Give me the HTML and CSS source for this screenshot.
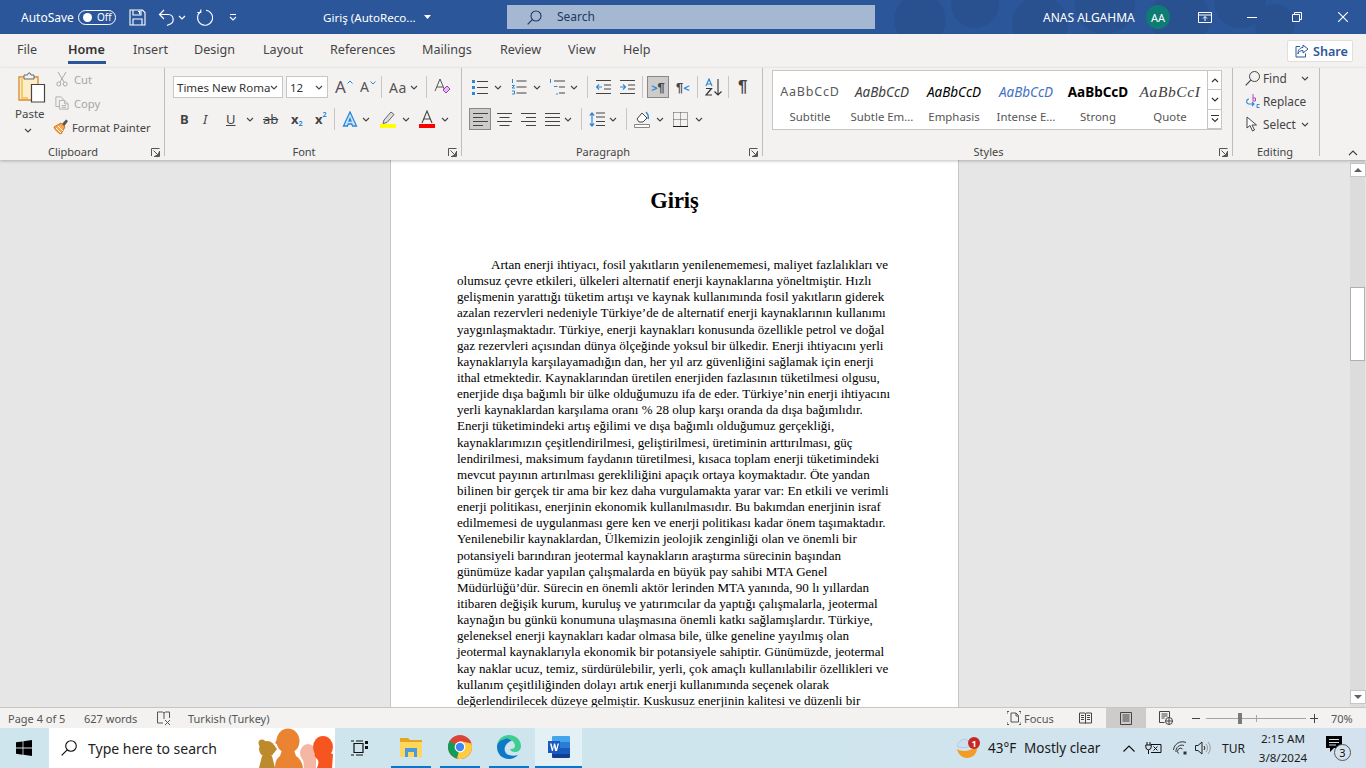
FILE: index.html
```html
<!DOCTYPE html>
<html lang="tr">
<head>
<meta charset="utf-8">
<title>Giriş - Word</title>
<link rel="stylesheet" href="styles.css">
</head>
<body>
<svg class="defs" width="0" height="0" aria-hidden="true">
  <symbol id="chev" viewBox="0 0 8 5"><path d="M1 1l3 3 3-3" fill="none" stroke="#444" stroke-width="1.1"/></symbol>
  <symbol id="launch" viewBox="0 0 9 9"><path d="M.5 8V.5H8.500M8.500 3v5.500H3M2.500 2.500l5 5M4.500 7.500h3v-3" fill="none" stroke="#555" stroke-width="1"/></symbol>
</svg>
<div class="app">
  <header class="titlebar">
    <svg class="clouds" width="520" height="34" viewBox="0 0 520 34" aria-hidden="true"><g fill="#29518f"><circle cx="40" cy="20" r="26"/><circle cx="95" cy="4" r="24"/><circle cx="160" cy="24" r="28"/><circle cx="225" cy="4" r="30"/><circle cx="300" cy="18" r="30"/><circle cx="360" cy="2" r="26"/><circle cx="395" cy="24" r="20"/></g></svg>
    <div class="qat">
      <span class="autosave">AutoSave</span>
      <span class="toggle"><i class="knob"></i><b>Off</b></span>
      <svg class="ic-save" width="17" height="17" viewBox="0 0 17 17"><path d="M1 1h12.500L16 3.500V16H1zM4 1v5h8V1M4 16v-6h9v6M9 2.500h1.500V5" fill="none" stroke="#fff" stroke-width="1.100"/></svg>
      <svg class="ic-undo" width="17" height="17" viewBox="0 0 17 17"><path d="M6 1L1.500 5.500 6 10M2 5.500h8.500a5 5 0 0 1 1 9.800L9 16.500" fill="none" stroke="#fff" stroke-width="1.200"/></svg>
      <svg class="ic-chev-w" width="8" height="5" viewBox="0 0 8 5"><path d="M1 1l3 3 3-3" fill="none" stroke="#fff" stroke-width="1.200"/></svg>
      <svg class="ic-redo" width="17" height="17" viewBox="0 0 17 17"><path d="M4.500 2.800A7.500 7.500 0 1 0 10 1.300M4.800 .5v3h-3.500" fill="none" stroke="#fff" stroke-width="1.100"/></svg>
      <svg class="ic-qat" width="8" height="7" viewBox="0 0 8 7"><path d="M1 .5h6M1 3l3 3 3-3" fill="none" stroke="#fff" stroke-width="1.100"/></svg>
    </div>
    <div class="doc-title"><span>Giriş (AutoReco...</span><svg width="7" height="4" viewBox="0 0 7 4"><path d="M0 0h7L3.500 4z" fill="#fff"/></svg></div>
    <div class="search">
      <svg width="15" height="15" viewBox="0 0 15 15"><circle cx="9" cy="6" r="5" fill="none" stroke="#1c3763" stroke-width="1.100"/><path d="M5.300 9.700L.7 14.300" stroke="#1c3763" stroke-width="1.200"/></svg>
      <span>Search</span>
    </div>
    <div class="user"><span>ANAS ALGAHMA</span><i class="avatar">AA</i></div>
    <div class="winbtns">
      <svg width="14" height="11" viewBox="0 0 14 11"><path d="M.5.500h13v10H.5zM.5 3h13M7 9V4.500M5 6.500l2-2 2 2" fill="none" stroke="#fff"/></svg>
      <svg width="10" height="1" viewBox="0 0 10 1"><path d="M0 .5h10" stroke="#fff"/></svg>
      <svg width="10" height="10" viewBox="0 0 10 10"><path d="M.5 2.500h7v7h-7zM2.500 2.500V.5h7v7h-2" fill="none" stroke="#fff"/></svg>
      <svg width="10" height="10" viewBox="0 0 10 10"><path d="M0 0l10 10M10 0L0 10" stroke="#fff" stroke-width="1.100"/></svg>
    </div>
  </header>

  <nav class="tabs">
    <a>File</a><a class="active">Home</a><a>Insert</a><a>Design</a><a>Layout</a><a>References</a><a>Mailings</a><a>Review</a><a>View</a><a>Help</a>
    <button class="share"><svg width="14" height="14" viewBox="0 0 14 14"><path d="M8 1l5 4-5 4V6.500C5 6.500 3.500 8 3 10c-.2-4 2-6.500 5-6.500zM5 2.500H1v10.500h9.500V9.500" fill="none" stroke="#2b579a" stroke-width="1"/></svg>Share</button>
  </nav>

  <section class="ribbon">
    <div class="group g-clip">
      <div class="clip-body">
        <div class="paste">
          <svg width="28" height="31" viewBox="0 0 28 31"><path d="M1 5h19v23H1z" fill="#fdeec9" stroke="#d98a2b" stroke-width="1.300"/><path d="M4 5v21h6" fill="none" stroke="#f5c96d" stroke-width="2"/><path d="M6 7V3h3.500l1-2h1.500l1 2H16v4z" fill="#f3f2f1" stroke="#666"/><path d="M13.500 12.500h13V30h-13z" fill="#fff" stroke="#444" stroke-width="1.200"/></svg>
          <span class="paste-l">Paste</span>
          <svg class="chev" width="8" height="5"><use href="#chev"/></svg>
        </div>
        <div class="clip-rows">
          <div class="clip-row off"><svg width="12" height="16" viewBox="0 0 12 16"><path d="M2 1l6 10M10 1L4 11" fill="none" stroke="#aaa"/><circle cx="2.800" cy="13" r="2" fill="none" stroke="#aaa"/><circle cx="9.200" cy="13" r="2" fill="none" stroke="#aaa"/></svg><span>Cut</span></div>
          <div class="clip-row off"><svg width="16" height="16" viewBox="0 0 16 16"><path d="M1 1h6l2 2v2M1 1v11h4M5 5h6l4 4v6H5zM11 5v4h4M7.500 11h5M7.500 13h5" fill="none" stroke="#aaa"/></svg><span>Copy</span></div>
          <div class="clip-row"><svg width="16" height="16" viewBox="0 0 16 16"><path d="M9 5l4-4.500 2 1.500-3.500 5z" fill="#555"/><path d="M1 8l7-4 4 4-4 7c-3-1-6-4-7-7z" fill="#f3a650" stroke="#d9731a"/><path d="M3 9l5 5M5 7l5 5" stroke="#fff"/></svg><span>Format Painter</span></div>
        </div>
      </div>
      <div class="g-label"><span>Clipboard</span><svg class="launch" width="9" height="9"><use href="#launch"/></svg></div>
    </div>

    <div class="group g-font">
      <div class="frow fr1">
        <div class="combo"><span>Times New Roma</span><svg width="8" height="5"><use href="#chev"/></svg></div>
        <div class="combo"><span>12</span><svg width="8" height="5"><use href="#chev"/></svg></div>
        <span class="a-btn">A<svg width="6" height="4" viewBox="0 0 6 4"><path d="M.5 3.500L3 1l2.500 2.500" fill="none" stroke="#2b88d8"/></svg></span>
        <span class="a-btn small">A<svg width="6" height="4" viewBox="0 0 6 4"><path d="M.5.500L3 3 5.500.5" fill="none" stroke="#2b88d8"/></svg></span>
        <i class="sep"></i>
        <span class="aa">Aa<svg width="8" height="5"><use href="#chev"/></svg></span>
        <i class="sep"></i>
        <svg width="17" height="18" viewBox="0 0 17 18"><path d="M1 13L6 1l5 12M3 9h6" fill="none" stroke="#555"/><path d="M9 12l4-4 3 3-4 4z" fill="#e3bdf0" stroke="#a13bb5"/></svg>
      </div>
      <div class="frow fr2">
        <b class="fmt bold">B</b>
        <i class="fmt ital">I</i>
        <span class="fmt und">U</span>
        <svg width="8" height="5"><use href="#chev"/></svg>
        <span class="fmt strike">ab</span>
        <span class="fmt sub">x<small>2</small></span>
        <span class="fmt sub">x<sup>2</sup></span>
        <i class="sep"></i>
        <svg width="16" height="16" viewBox="0 0 16 16"><path d="M1.500 15L8 1l6.500 14h-4L9.800 13H6.200l-.7 2zM7 10h2L8 7.500z" fill="#cfe6f8" stroke="#2b88d8" stroke-width="1.300"/></svg>
        <svg width="8" height="5"><use href="#chev"/></svg>
        <svg width="16" height="18" viewBox="0 0 16 18"><path d="M4 10l7-8 3 2.500-7 8-4 1z" fill="#ddd" stroke="#666"/><path d="M0 14h16v4H0z" fill="#ff0"/></svg>
        <svg width="8" height="5"><use href="#chev"/></svg>
        <svg width="16" height="18" viewBox="0 0 16 18"><path d="M3 13L8 1l5 12M4.800 9h6.400" fill="none" stroke="#444" stroke-width="1.100"/><path d="M0 14h16v4H0z" fill="#f00"/></svg>
        <svg width="8" height="5"><use href="#chev"/></svg>
      </div>
      <div class="g-label"><span>Font</span><svg class="launch" width="9" height="9"><use href="#launch"/></svg></div>
    </div>

    <div class="group g-para">
      <div class="frow pr1">
        <svg width="16" height="15" viewBox="0 0 16 15"><path d="M0 0h3v3H0zM0 6h3v3H0zM0 12h3v3H0z" fill="#2b88d8"/><path d="M5 1.500h11M5 7.500h11M5 13.500h11" stroke="#444"/></svg>
        <svg width="8" height="5"><use href="#chev"/></svg>
        <svg width="16" height="16" viewBox="0 0 16 16"><path d="M1.500 0v4M1 6.500h2.500L1 9h3M1 12h2.500v3H1" fill="none" stroke="#2b88d8"/><path d="M5.500 2h10M5.500 8h10M5.500 14h10" stroke="#444"/></svg>
        <svg width="8" height="5"><use href="#chev"/></svg>
        <svg width="16" height="16" viewBox="0 0 16 16"><path d="M1.500 0v4" stroke="#2b88d8"/><path d="M5 7.500h3.500M8 14v2" stroke="#2b88d8"/><path d="M5 2h11M10 8h6M10 14h6" stroke="#444"/></svg>
        <svg width="8" height="5"><use href="#chev"/></svg>
        <i class="sep"></i>
        <svg width="15" height="14" viewBox="0 0 15 14"><path d="M0 .5h15M8 5h7M8 9h7M0 13.500h15" stroke="#444"/><path d="M6 7H.5M3 4.500L.5 7 3 9.500" fill="none" stroke="#2b88d8" stroke-width="1.200"/></svg>
        <svg width="15" height="14" viewBox="0 0 15 14"><path d="M0 .5h15M8 5h7M8 9h7M0 13.500h15" stroke="#444"/><path d="M0 7h5.500M3 4.500L5.500 7 3 9.500" fill="none" stroke="#2b88d8" stroke-width="1.200"/></svg>
        <i class="sep"></i>
        <span class="pressed"><em class="caret">&gt;</em><b>¶</b></span>
        <span class="rtl"><b>¶</b><em class="caret">&lt;</em></span>
        <i class="sep"></i>
        <svg width="17" height="18" viewBox="0 0 17 18"><path d="M1 8l3-7 3 7M2 6h4" fill="none" stroke="#2b88d8" stroke-width="1.200"/><path d="M1 10.500h5.500L1 17h6" fill="none" stroke="#333" stroke-width="1.200"/><path d="M13 1v16M9.500 13.500L13 17l3.500-3.500" fill="none" stroke="#333" stroke-width="1.100"/></svg>
        <i class="sep"></i>
        <span class="pilcrow">¶</span>
      </div>
      <div class="frow pr2">
        <span class="pressed"><svg width="15" height="13" viewBox="0 0 15 13"><path d="M0 .5h15M0 4.500h10M0 8.500h15M0 12.500h10" stroke="#444"/></svg></span>
        <svg width="15" height="13" viewBox="0 0 15 13"><path d="M0 .5h15M2.500 4.500h10M0 8.500h15M2.500 12.500h10" stroke="#444"/></svg>
        <svg width="15" height="13" viewBox="0 0 15 13"><path d="M0 .5h15M5 4.500h10M0 8.500h15M5 12.500h10" stroke="#444"/></svg>
        <svg width="15" height="13" viewBox="0 0 15 13"><path d="M0 .5h15M0 4.500h15M0 8.500h15M0 12.500h15" stroke="#444"/></svg>
        <svg width="8" height="5"><use href="#chev"/></svg>
        <i class="sep"></i>
        <svg width="16" height="15" viewBox="0 0 16 15"><path d="M3 1v13M.8 3.500L3 1l2.200 2.500M.8 11.500L3 14l2.200-2.500" fill="none" stroke="#2b88d8" stroke-width="1.200"/><path d="M7 1h9M7 5h9M7 9.500h9M7 13.500h9" stroke="#444"/></svg>
        <svg width="8" height="5"><use href="#chev"/></svg>
        <i class="sep"></i>
        <svg width="16" height="17" viewBox="0 0 16 17"><path d="M3 8l5-6 5 5-4 4H5z" fill="#fff" stroke="#444"/><path d="M12 1c2 2 3 4 2 7" fill="none" stroke="#2b88d8" stroke-width="1.500"/><path d="M.5 13.500h15v3H.5z" fill="#fff" stroke="#888"/></svg>
        <svg width="8" height="5"><use href="#chev"/></svg>
        <svg width="15" height="15" viewBox="0 0 15 15"><path d="M.5.500h14M.5 7.500h14M.5.500v14M14.500.500v14M7.500.500v14" fill="none" stroke="#555" stroke-dasharray="1 1"/><path d="M0 14.500h15" stroke="#222"/></svg>
        <svg width="8" height="5"><use href="#chev"/></svg>
      </div>
      <div class="g-label"><span>Paragraph</span><svg class="launch" width="9" height="9"><use href="#launch"/></svg></div>
    </div>

    <div class="group g-styles">
      <div class="gallery">
        <div class="style"><span class="s-sample s1">AaBbCcD</span><span class="s-name">Subtitle</span></div>
        <div class="style"><span class="s-sample s2">AaBbCcD</span><span class="s-name">Subtle Em...</span></div>
        <div class="style"><span class="s-sample s3">AaBbCcD</span><span class="s-name">Emphasis</span></div>
        <div class="style"><span class="s-sample s4">AaBbCcD</span><span class="s-name">Intense E...</span></div>
        <div class="style"><span class="s-sample s5">AaBbCcD</span><span class="s-name">Strong</span></div>
        <div class="style"><span class="s-sample s6">AaBbCcI</span><span class="s-name">Quote</span></div>
        <div class="g-scroll">
          <span><svg width="8" height="5" viewBox="0 0 8 5"><path d="M1 4l3-3 3 3" fill="none" stroke="#333" stroke-width="1.200"/></svg></span>
          <span><svg width="8" height="5" viewBox="0 0 8 5"><path d="M1 1l3 3 3-3" fill="none" stroke="#333" stroke-width="1.200"/></svg></span>
          <span><svg width="8" height="8" viewBox="0 0 8 8"><path d="M0 .5h8M1 3.500l3 3 3-3" fill="none" stroke="#333" stroke-width="1.100"/></svg></span>
        </div>
      </div>
      <div class="g-label"><span>Styles</span><svg class="launch" width="9" height="9"><use href="#launch"/></svg></div>
    </div>

    <div class="group g-edit">
      <div class="edit-rows">
        <div class="edit-row"><svg width="15" height="15" viewBox="0 0 15 15"><circle cx="9.500" cy="5.500" r="5" fill="none" stroke="#444"/><path d="M5.800 9.200L.7 14.300" stroke="#444" stroke-width="1.200"/></svg><span>Find</span><svg class="e-chev" width="8" height="5"><use href="#chev"/></svg></div>
        <div class="edit-row"><svg width="15" height="15" viewBox="0 0 15 15"><path d="M8 0v7M8 4h2.500v3H8" fill="none" stroke="#b146c2"/><path d="M14.500 10.500h-2.500v3h2.500" fill="none" stroke="#2b88d8"/><path d="M4 5C1 5 .8 10 4 10h5M7 8l2 2-2 2" fill="none" stroke="#2b88d8" stroke-width="1.100"/></svg><span>Replace</span></div>
        <div class="edit-row"><svg width="15" height="16" viewBox="0 0 15 16"><path d="M2 1v11l3-2.500L7.500 15l2-1-2.500-5h4.500z" fill="#fff" stroke="#444"/></svg><span>Select</span><svg class="e-chev2" width="8" height="5"><use href="#chev"/></svg></div>
      </div>
      <div class="g-label"><span>Editing</span></div>
    </div>
    <svg class="collapse" width="10" height="6" viewBox="0 0 10 6"><path d="M1 5l4-4 4 4" fill="none" stroke="#444" stroke-width="1.100"/></svg>
  </section>

  <main class="workspace">
    <article class="page">
      <h1>Giriş</h1>
      <div class="body-text">
        <p class="first">Artan enerji ihtiyacı, fosil yakıtların yenilenememesi, maliyet fazlalıkları ve</p>
        <p>olumsuz çevre etkileri, ülkeleri alternatif enerji kaynaklarına yöneltmiştir. Hızlı</p>
        <p>gelişmenin yarattığı tüketim artışı ve kaynak kullanımında fosil yakıtların giderek</p>
        <p>azalan rezervleri nedeniyle Türkiye’de de alternatif enerji kaynaklarının kullanımı</p>
        <p>yaygınlaşmaktadır. Türkiye, enerji kaynakları konusunda özellikle petrol ve doğal</p>
        <p>gaz rezervleri açısından dünya ölçeğinde yoksul bir ülkedir. Enerji ihtiyacını yerli</p>
        <p>kaynaklarıyla karşılayamadığın dan, her yıl arz güvenliğini sağlamak için enerji</p>
        <p>ithal etmektedir. Kaynaklarından üretilen enerjiden fazlasının tüketilmesi olgusu,</p>
        <p>enerjide dışa bağımlı bir ülke olduğumuzu ifa de eder. Türkiye’nin enerji ihtiyacını</p>
        <p>yerli kaynaklardan karşılama oranı % 28 olup karşı oranda da dışa bağımlıdır.</p>
        <p>Enerji tüketimindeki artış eğilimi ve dışa bağımlı olduğumuz gerçekliği,</p>
        <p>kaynaklarımızın çeşitlendirilmesi, geliştirilmesi, üretiminin arttırılması, güç</p>
        <p>lendirilmesi, maksimum faydanın türetilmesi, kısaca toplam enerji tüketimindeki</p>
        <p>mevcut payının artırılması gerekliliğini apaçık ortaya koymaktadır. Öte yandan</p>
        <p>bilinen bir gerçek tir ama bir kez daha vurgulamakta yarar var: En etkili ve verimli</p>
        <p>enerji politikası, enerjinin ekonomik kullanılmasıdır. Bu bakımdan enerjinin israf</p>
        <p>edilmemesi de uygulanması gere ken ve enerji politikası kadar önem taşımaktadır.</p>
        <p>Yenilenebilir kaynaklardan, Ülkemizin jeolojik zenginliği olan ve önemli bir</p>
        <p>potansiyeli barındıran jeotermal kaynakların araştırma sürecinin başından</p>
        <p>günümüze kadar yapılan çalışmalarda en büyük pay sahibi MTA Genel</p>
        <p>Müdürlüğü’dür. Sürecin en önemli aktör lerinden MTA yanında, 90 lı yıllardan</p>
        <p>itibaren değişik kurum, kuruluş ve yatırımcılar da yaptığı çalışmalarla, jeotermal</p>
        <p>kaynağın bu günkü konumuna ulaşmasına önemli katkı sağlamışlardır. Türkiye,</p>
        <p>geleneksel enerji kaynakları kadar olmasa bile, ülke geneline yayılmış olan</p>
        <p>jeotermal kaynaklarıyla ekonomik bir potansiyele sahiptir. Günümüzde, jeotermal</p>
        <p>kay naklar ucuz, temiz, sürdürülebilir, yerli, çok amaçlı kullanılabilir özellikleri ve</p>
        <p>kullanım çeşitliliğinden dolayı artık enerji kullanımında seçenek olarak</p>
        <p>değerlendirilecek düzeye gelmiştir. Kuskusuz enerjinin kalitesi ve düzenli bir</p>
      </div>
    </article>
    <div class="vscroll">
      <span class="sb-btn"><svg width="8" height="4" viewBox="0 0 8 4"><path d="M4 0l4 4H0z" fill="#606060"/></svg></span>
      <span class="sb-thumb"></span>
      <span class="sb-btn"><svg width="8" height="4" viewBox="0 0 8 4"><path d="M0 0h8L4 4z" fill="#606060"/></svg></span>
    </div>
  </main>

  <footer class="status">
    <span class="st-page">Page 4 of 5</span>
    <span class="st-words">627 words</span>
    <svg class="st-proof" width="14" height="14" viewBox="0 0 14 14"><path d="M.5 1h5l1.500 1 1.500-1h4v6M7 2v6M.5 1v11H6" fill="none" stroke="#555"/><path d="M8 9l5 5M13 9l-5 5" stroke="#555"/></svg>
    <span class="st-lang">Turkish (Turkey)</span>
    <div class="st-right">
      <svg class="st-focus" width="14" height="14" viewBox="0 0 14 14"><path d="M4 2h5l2.500 2.500V11H4zM9 2v3h2.500M0 3V.5h2M12 .5h2V3M0 11v2.500h2M12 13.500h2V11" fill="none" stroke="#555"/></svg>
      <span class="st-focus-l">Focus</span>
      <svg class="st-read" width="13" height="12" viewBox="0 0 13 12"><path d="M.5 1H6l.5.500L7 1h5.500v10H7l-.5.500L6 11H.5zM6.500 1.500v9.500M2 3.500h3M2 5.500h3M2 7.500h3M8 3.500h3M8 5.500h3M8 7.500h3" fill="none" stroke="#444"/></svg>
      <span class="st-print"><svg width="12" height="13" viewBox="0 0 12 13"><path d="M.5.500h11v12H.5zM2.500 3h7M2.500 5h7M2.500 7h7M2.500 9h7" fill="none" stroke="#444"/></svg></span>
      <svg class="st-web" width="14" height="14" viewBox="0 0 14 14"><path d="M.5.500h10v7M.5.500v11h5M2.500 3h6M2.500 5h6M2.500 7h3" fill="none" stroke="#444"/><circle cx="10" cy="10" r="3.500" fill="#f3f2f1" stroke="#444"/><path d="M6.500 10h7M10 6.500v7" stroke="#444"/></svg>
      <span class="z-sym z-minus"></span>
      <span class="slider"><i class="tick"></i><i class="thumb"></i></span>
      <span class="z-sym z-plus"></span>
      <span class="zoom-val">70%</span>
    </div>
  </footer>

  <footer class="taskbar">
    <svg class="win" width="16" height="16" viewBox="0 0 16 16"><path d="M0 2.300l6.600-.9v6.200H0zM7.400 1.300L16 0v7.600H7.400zM0 8.400h6.600v6.300L0 13.800zM7.400 8.400H16V16l-8.600-1.200z" fill="#000"/></svg>
    <div class="tb-search">
      <svg width="16" height="16" viewBox="0 0 16 16"><circle cx="10" cy="6" r="5.300" fill="none" stroke="#111" stroke-width="1.100"/><path d="M6.200 9.800L.7 15.300" stroke="#111" stroke-width="1.200"/></svg>
      <span>Type here to search</span>
      <svg class="people" width="76" height="40" viewBox="0 0 76 40"><g fill="#bd8a2c"><circle cx="9" cy="21" r="8"/><circle cx="4" cy="15" r="3.500"/><path d="M16 17l3 4-3 4zM4 28h10l3 12H1z"/></g><g fill="#f5b6a3"><ellipse cx="50" cy="25" rx="8" ry="9"/><path d="M45 30h13v10H46z"/></g><g fill="#ea8332"><ellipse cx="30" cy="13" rx="11.500" ry="12.500"/><path d="M20 10l-3 5 3 2zM24 22h12l2 6c3 2 6 5 7 12H17c0-5 1-9 5-12z"/></g><g fill="#f6551f"><ellipse cx="65" cy="19" rx="10" ry="11"/><path d="M56 20l1 9 3 3c1 3 0 5-1 8h15l1-14z"/></g></svg>
    </div>
    <svg class="taskview" width="17" height="16" viewBox="0 0 17 16"><path d="M3 3.500h9v9H3zM0 1h3M5 1h7M0 15h3M5 15h7" fill="none" stroke="#111" stroke-width="1.200"/><path d="M14 1h3v3h-3zM14 6h3v3h-3z" fill="#111"/></svg>
    <span class="app-ic"><svg width="22" height="19" viewBox="0 0 22 19"><path d="M0 0h8l2 2h12v16H0z" fill="#e6a51a"/><path d="M0 4h22v15H0z" fill="#ffd75e"/><path d="M5 10h12v9h-3v-5H8v5H5z" fill="#4a9bdc"/></svg></span>
    <span class="app-ic"><svg width="24" height="24" viewBox="0 0 24 24"><circle cx="12" cy="12" r="12" fill="#db4437"/><path d="M12 12L1.600 6l-.1.200A12 12 0 0 0 9 23.600z" fill="#0f9d58"/><path d="M12 12l-3 11.600A12 12 0 0 0 23.400 8.500L12 6z" fill="#ffcd40"/><circle cx="12" cy="12" r="5.400" fill="#fff"/><circle cx="12" cy="12" r="4.200" fill="#4285f4"/></svg></span>
    <span class="app-ic"><svg width="24" height="24" viewBox="0 0 24 24"><path d="M12 0c7 0 12 5 12 11 0 4-3 6-6 6-3 0-5-2-5-3 1 0 5 0 5-3 0-3-3-7-8-7S1 7 0 12C0 5 5 0 12 0z" fill="#3ccf91"/><path d="M0 12c0 7 5 12 12 12 4 0 7-2 9-4-3 1-6 1-9 0-4-1-5-5-4-8 1-3 4-6 7-6-2-2-5-3-7-2C3 5 0 8 0 12z" fill="#0f79c9"/></svg></span>
    <span class="app-ic active"><svg width="24" height="24" viewBox="0 0 24 24"><path d="M6 1h16a1 1 0 0 1 1 1v5H5V2a1 1 0 0 1 1-1z" fill="#41a5ee"/><path d="M5 7h18v6H5z" fill="#2b7cd3"/><path d="M5 13h18v6H5z" fill="#185abd"/><path d="M5 19h18v3a1 1 0 0 1-1 1H6a1 1 0 0 1-1-1z" fill="#103f91"/><path d="M1 6h12v12H1z" fill="#185abd"/><path d="M3 8.500h1.500l1.300 5 1.200-5h1.200l1.200 5 1.200-5h1.400l-2 7.500H8.100L7 11l-1.200 5H4.900z" fill="#fff"/></svg></span>
    <div class="tray">
      <span class="weather"><svg width="24" height="22" viewBox="0 0 24 22"><path d="M1 12c4 3 13 3 20-3 1 7-4 12-10 12-5 0-9-4-10-9z" fill="#f49b23"/><path d="M2 10a3 3 0 0 1 2-5 4.500 4.500 0 0 1 8-1 3 3 0 0 1 3 5c-4 2-9 2-13 1z" fill="#cde0f0" stroke="#9dbcd8" stroke-width=".6"/><circle cx="18" cy="6" r="6" fill="#c62828"/><text x="18" y="9.500" class="badge">1</text></svg></span>
      <span class="temp">43°F</span>
      <span class="cond">Mostly clear</span>
      <svg class="t-up" width="12" height="7" viewBox="0 0 12 7"><path d="M.5 6.500L6 1l5.500 5.500" fill="none" stroke="#111" stroke-width="1.200"/></svg>
      <svg class="t-pow" width="17" height="14" viewBox="0 0 17 14"><path d="M2 1v3M5 1v3M.8 4h5.400v2a2.700 2.700 0 0 1-5.400 0zM3.500 9v4" fill="none" stroke="#111"/><path d="M6 3.500h10v8H6" fill="none" stroke="#111"/><path d="M8.500 5.500l4 4M12.500 5.500l-4 4" stroke="#111"/></svg>
      <svg class="t-wifi" width="14" height="14" viewBox="0 0 14 14"><path d="M.5 9A9 9 0 0 1 13 1.500M3 11a6 6 0 0 1 8-6.500M5.500 12.500A3 3 0 0 1 9.500 8" fill="none" stroke="#333"/><path d="M10.500 10.500h3v3h-3z" fill="#333"/></svg>
      <svg class="t-vol" width="16" height="14" viewBox="0 0 16 14"><path d="M.5 4.500H3L7 1v12L3 9.500H.5zM9 5a3 3 0 0 1 0 4" fill="none" stroke="#222"/><path d="M11 3a6 6 0 0 1 0 8M13 1a9 9 0 0 1 0 12" fill="none" stroke="#999"/></svg>
      <span class="lang">TUR</span>
      <span class="clock"><span>2:15 AM</span><span>3/8/2024</span></span>
      <span class="notif"><svg width="18" height="17" viewBox="0 0 18 17"><path d="M0 0h16v12H8l-4 4v-4H0z" fill="#000"/><path d="M3 3.500h10M3 6.500h10M3 9h7" stroke="#d3e2ee"/></svg><b>3</b></span>
    </div>
  </footer>
</div>
</body>
</html>
```

FILE: styles.css
```css
* { box-sizing: border-box; }
html, body { margin: 0; padding: 0; width: 1366px; height: 768px; overflow: hidden; }
body { font-family: "Noto Sans", "Open Sans", sans-serif; color: #444; }
svg { display: block; flex: none; }
.defs { position: absolute; }
.app { width: 1366px; height: 768px; display: flex; flex-direction: column; background: #f3f2f1; }

/* title bar */
.titlebar { height: 34px; flex: none; background: #2b579a; color: #fff; display: flex; align-items: center; position: relative; overflow: hidden; font-size: 12px; }
.clouds { position: absolute; left: 880px; top: 0; }
.qat { width: 323px; flex: none; display: flex; align-items: center; padding-left: 21px; position: relative; }
.autosave { width: 57px; }
.toggle { width: 38px; height: 15px; border: 1px solid #fff; border-radius: 8px; display: flex; align-items: center; padding-left: 4px; font-size: 10px; }
.knob { width: 9px; height: 9px; background: #fff; border-radius: 50%; margin-right: 5px; }
.toggle b { font-weight: 400; }
.ic-save { margin-left: 13px; }
.ic-undo { margin-left: 12px; }
.ic-chev-w { margin-left: 3px; }
.ic-redo { margin-left: 10px; }
.ic-qat { margin-left: 16px; }
.doc-title { width: 184px; flex: none; display: flex; align-items: center; position: relative; font-size: 11.600px; }
.doc-title span { width: 101px; white-space: nowrap; }
.search { width: 368px; height: 24px; flex: none; background: #a5b8d2; color: #1c3763; display: flex; align-items: center; padding-left: 20px; gap: 15px; position: relative; }
.search span { padding-bottom: 2px; }
.user { margin-left: 168px; width: 127px; flex: none; display: flex; align-items: center; justify-content: space-between; position: relative; }
.avatar { width: 24px; height: 24px; border-radius: 50%; background: #0e7c74; font-style: normal; font-size: 11px; display: flex; align-items: center; justify-content: center; }
.winbtns { margin-left: 28px; display: flex; align-items: center; position: relative; }
.winbtns svg:nth-child(2) { margin-left: 35px; }
.winbtns svg:nth-child(3) { margin-left: 35px; }
.winbtns svg:nth-child(4) { margin-left: 36px; }

/* tabs */
.tabs { height: 34px; flex: none; display: grid; grid-template-columns: 51px 65px 61px 69px 67px 92px 78px 68px 55px 40px 1fr; padding-left: 17px; padding-right: 13px; align-items: center; font-size: 12.6px; color: #444; position: relative; }
.tabs a { height: 34px; line-height: 32px; }
.tabs a.active { font-weight: 600; color: #333; position: relative; }
.tabs a.active::after { content: ""; position: absolute; left: 0; top: 27px; width: 38px; height: 3px; background: #2b579a; }
.share { justify-self: end; width: 66px; height: 22px; border: 1px solid #e1dfdd; border-radius: 2px; background: #fff; color: #2b579a; font: 600 12.6px "Noto Sans", sans-serif; display: flex; align-items: center; gap: 4px; padding: 0 0 0 7px; }

/* ribbon */
.ribbon { height: 92px; flex: none; display: flex; position: relative; z-index: 2; box-shadow: 0 1px 3px rgba(0,0,0,.25); background: #f3f2f1; }
.group { height: 88px; border-right: 1px solid #bdbdbd; display: flex; flex-direction: column; flex: none; position: relative; }
.g-clip { width: 165px; }
.g-font { width: 297px; padding-top: 8px; }
.g-para { width: 301px; padding-top: 8px; }
.g-styles { width: 470px; }
.g-edit { width: 87px; }
.g-label { position: absolute; left: 0; right: 0; top: 76px; height: 16px; padding-right: 18px; text-align: center; font-size: 11px; line-height: 16px; color: #444; }
.g-edit .g-label { padding-right: 2px; }
.launch { position: absolute; right: 4px; top: 4px; }

/* clipboard */
.clip-body { display: flex; }
.paste { width: 53px; padding: 4px 0 0 18px; flex: none; display: flex; flex-direction: column; }
.paste-l { margin: 2px 0 0 -3px; font-size: 11.500px; line-height: 17px; }
.paste .chev { margin: 6px 0 0 6px; }
.clip-rows { display: flex; flex-direction: column; gap: 2px; }
.clip-row { height: 22px; display: flex; align-items: center; gap: 3px; font-size: 11.200px; white-space: nowrap; }
.clip-row svg { width: 16px; }
.clip-row.off { color: #a6a6a6; }
.clip-row.off svg:first-child { margin-left: 2px; width: 14px; }
.clip-row.off span { margin-left: 2px; }

/* row grids */
.frow { display: grid; height: 22px; align-items: center; grid-auto-flow: column; justify-items: start; }
.frow > svg[width="8"] { margin-left: -3px; }
.sep { width: 1px; height: 22px; background: #c8c6c4; display: block; }
.fr1 { margin: 0 0 10px 8px; grid-template-columns: 113px 49px 25px 21px 8px 37px 8px 20px; }
.fr2 { margin-left: 15px; grid-template-columns: 23px 23px 23px 14px 28px 24px 19px 8px 23px 15px 25px 14px 25px 10px; }
.pr1 { margin: 0 0 10px 10px; grid-template-columns: 25px 14px 25px 13px 24px 14px 9px 24px 22px 5px 29px 21px 8px 23px 10px 14px; }
.pr2 { margin-left: 7px; grid-template-columns: 28px 24px 24px 22px 14px 8px 23px 14px 8px 25px 14px 25px 10px; }
.combo { height: 22px; background: #fff; border: 1px solid #c8c6c4; display: flex; align-items: center; justify-content: space-between; padding: 0 4px 0 3px; font-size: 11.500px; color: #333; white-space: nowrap; }
.combo:nth-child(1) { width: 110px; }
.combo:nth-child(2) { width: 42px; }
.a-btn { font-size: 17px; line-height: 20px; color: #555; display: flex; gap: 1px; }
.a-btn svg { margin-top: 3px; }
.a-btn.small { font-size: 14px; }
.a-btn.small svg { margin-top: 4px; }
.aa { font-size: 14px; display: flex; align-items: center; gap: 3px; color: #555; letter-spacing: .5px; }
.fmt { font-size: 13px; color: #444; font-style: normal; font-family: "Noto Sans", sans-serif; }
.bold { font-weight: 700; }
.ital { font-style: italic; font-weight: 400; }
.und { text-decoration: underline; }
.strike { text-decoration: line-through; }
.sub { font-weight: 700; display: flex; }
.sub small { font-size: 7px; color: #2b88d8; margin-top: 9px; }
.sub sup { font-size: 7px; color: #2b88d8; line-height: 8px; margin-top: 1px; }
.pressed { width: 22px; height: 22px; background: #cdcccb; border: 1px solid #8a8886; display: flex; align-items: center; justify-content: center; font-size: 13px; }
.pressed b, .rtl b { font-family: "Liberation Sans", sans-serif; font-size: 13px; color: #444; }
.caret { font-style: normal; font-weight: 700; color: #2b88d8; font-size: 11px; }
.rtl { display: flex; align-items: center; }
.pilcrow { font-family: "Liberation Sans", sans-serif; font-weight: 700; font-size: 17px; color: #444; }

/* styles gallery */
.gallery { margin: 2px 0 0 9px; width: 450px; height: 60px; background: #fff; border: 1px solid #c8c6c4; display: grid; grid-template-columns: repeat(6, 72px) 1fr; padding-left: 1px; }
.style { display: flex; flex-direction: column; align-items: center; padding-top: 11px; overflow: hidden; }
.s-sample { height: 20px; line-height: 20px; font-size: 14px; white-space: nowrap; width: 64px; overflow: hidden; text-align: center; }
.s-name { margin-top: 7px; font-size: 11.400px; line-height: 16px; color: #555; white-space: nowrap; }
.s1 { letter-spacing: .8px; color: #5a5a5a; font-size: 12.500px; }
.s2 { font-style: italic; color: #404040; font-size: 13.500px; }
.s3 { font-style: italic; color: #000; font-size: 13.500px; }
.s4 { font-style: italic; color: #4472c4; font-size: 13.500px; }
.s5 { font-weight: 700; color: #000; font-size: 13.500px; }
.s6 { font-family: "Liberation Serif", serif; font-style: italic; color: #404040; font-size: 15.500px; letter-spacing: .6px; }
.g-scroll { margin-left: auto; width: 15px; display: flex; flex-direction: column; margin-top: -1px; margin-right: -1px; }
.g-scroll span { height: 20px; border: 1px solid #c8c6c4; margin-top: -1px; background: #fff; display: flex; align-items: center; justify-content: center; flex: 1; }
.g-scroll span:first-child { margin-top: 0; }

/* editing */
.edit-rows { display: flex; flex-direction: column; gap: 1px; padding: 0 0 0 12px; margin-top: -1px; }
.edit-row { height: 22px; display: flex; align-items: center; gap: 3px; font-size: 11.800px; white-space: nowrap; }
.e-chev { margin-left: 11px; }
.e-chev2 { margin-left: 2px; }
.collapse { position: absolute; left: 1348px; top: 82px; }

/* document */
.workspace { height: 547px; flex: none; background: #e6e6e6; display: flex; overflow: hidden; }
.page { margin-left: 390px; width: 569px; background: #fff; border-left: 1px solid #c6c6c6; border-right: 1px solid #c6c6c6; padding: 26px 0 0 66px; font-family: "Liberation Serif", "Times New Roman", serif; color: #000; overflow: hidden; }
.page h1 { margin: 0 0 0 -66px; width: 567px; text-align: center; font-size: 22.500px; line-height: 30px; font-weight: 700; }
.body-text { margin-top: 41px; font-size: 13.050px; line-height: 16.150px; white-space: nowrap; }
.body-text p { margin: 0; height: 16.150px; }
.body-text .first { padding-left: 34px; }
.vscroll { margin-left: auto; width: 16px; display: flex; flex-direction: column; padding-top: 3px; background: #dcdcdc; border-right: 1px solid #e6e6e6; }
.sb-btn { width: 16px; height: 14px; background: #fff; border: 1px solid #c6c6c6; display: flex; align-items: center; justify-content: center; flex: none; }
.sb-thumb { width: 15px; height: 74px; margin: 110px 0 329px; background: #fff; border: 1px solid #b0b0b0; flex: none; }

/* status */
.status { height: 21px; flex: none; border-top: 1px solid #c6c6c6; display: flex; align-items: center; font-size: 11px; color: #555; position: relative; z-index: 1; }
.st-page { margin-left: 8px; width: 76px; }
.st-words { width: 73px; }
.st-proof { margin-right: 17px; }
.st-lang { white-space: nowrap; }
.st-right { position: absolute; left: 1007px; top: 0; height: 20px; display: flex; align-items: center; }
.st-focus-l { margin-left: 3px; width: 55px; }
.st-print { margin-left: 14px; width: 40px; height: 20px; background: #cdcccb; display: flex; align-items: center; justify-content: center; }
.st-web { margin-left: 13px; }
.z-sym { width: 8px; height: 9px; position: relative; display: block; }
.z-sym::before { content: ""; position: absolute; left: 0; top: 4px; width: 8px; height: 1px; background: #444; }
.z-minus { margin-left: 19px; }
.z-plus::after { content: ""; position: absolute; left: 3.500px; top: 0; width: 1px; height: 9px; background: #444; }
.slider { width: 100px; height: 12px; margin: 0 4px 0 6px; position: relative; display: block; }
.slider::before { content: ""; position: absolute; left: 0; right: 0; top: 6px; height: 1px; background: #a6a6a6; }
.tick { position: absolute; left: 50px; top: 3px; width: 1px; height: 7px; background: #a6a6a6; }
.thumb { position: absolute; left: 32px; top: 1px; width: 4px; height: 11px; background: #7a7a7a; }
.zoom-val { margin-left: 13px; }

/* taskbar */
.taskbar { height: 40px; flex: none; background: linear-gradient(90deg, #cfe5ee 0%, #cfe5ee 60%, #d3e2ee 100%); display: flex; align-items: center; position: relative; color: #1a1a1a; }
.win { margin-left: 16px; }
.tb-search { margin-left: 17px; width: 286px; height: 40px; background: #fff; display: flex; align-items: center; padding-left: 12px; font-size: 14px; color: #222; overflow: hidden; flex: none; }
.tb-search span { margin-left: 11px; width: 170px; white-space: nowrap; }
.taskview { margin-left: 16px; }
.app-ic { width: 40px; height: 40px; margin-left: 9px; display: flex; align-items: center; justify-content: center; border-bottom: 2px solid #0078d4; flex: none; }
.taskview + .app-ic { margin-left: 23px; }
.app-ic.active { width: 47px; margin-left: 6px; background: #e3f0f6; }
.tray { position: absolute; left: 956px; top: 0; height: 40px; display: flex; align-items: center; }
.badge { font: 700 9px "Noto Sans", sans-serif; fill: #fff; text-anchor: middle; }
.temp { margin-left: 8px; width: 36px; font-size: 13.500px; }
.cond { width: 99px; font-size: 13.500px; white-space: nowrap; }
.t-pow { margin-left: 10px; }
.t-wifi { margin-left: 11px; }
.t-vol { margin-left: 8px; }
.lang { margin-left: 11px; font-size: 12px; width: 21px; }
.clock { width: 80px; display: flex; flex-direction: column; align-items: center; font-size: 11.600px; line-height: 19px; }
.notif { margin-left: 3px; position: relative; width: 24px; height: 24px; display: block; }
.notif b { position: absolute; left: 8px; top: 8px; width: 17px; height: 17px; border-radius: 50%; background: #d3e2ee; border: 1px solid #555; font: 400 11px/15px "Noto Sans", sans-serif; text-align: center; color: #111; }
```
